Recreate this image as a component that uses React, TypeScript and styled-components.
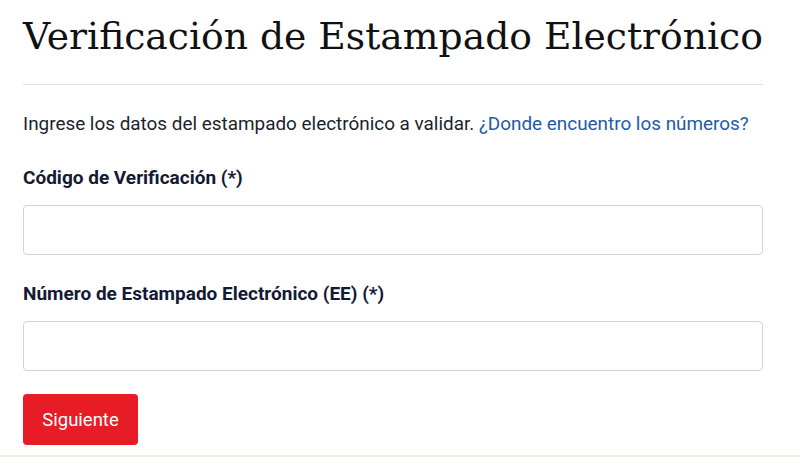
import React from 'react';
import styled, { createGlobalStyle } from 'styled-components';

const GlobalStyle = createGlobalStyle`
  html, body {
    margin: 0;
    padding: 0;
    background: #ffffff;
  }
  body {
    font-family: Roboto, "Liberation Sans", sans-serif;
    color: #1b1f2e;
  }
`;

const Page = styled.div`
  width: 800px;
  height: 457px;
  box-sizing: border-box;
  overflow: hidden;
  border-bottom: 2px solid #eef0e6;
`;

const Content = styled.main`
  width: 740px;
  margin-left: 23px;
  display: flex;
  flex-direction: column;
`;

const Title = styled.h1`
  margin: 12px 0 0;
  font-family: "DejaVu Serif", "Liberation Serif", serif;
  font-weight: 400;
  font-size: 37.7px;
  line-height: 48px;
  color: #111111;
  white-space: nowrap;
`;

const Divider = styled.hr`
  margin: 24px 0 0;
  border: 0;
  border-top: 1px solid #e3e3e3;
`;

const Intro = styled.p`
  margin: 27px 0 0;
  font-size: 18.9px;
  line-height: 24px;
  color: #1b1f2e;
`;

const HelpLink = styled.a`
  color: #1f5ba8;
  text-decoration: none;
`;

const Field = styled.div`
  display: flex;
  flex-direction: column;
  margin-top: ${(p: { $top: number }) => p.$top}px;
`;

const Label = styled.label`
  font-size: 19px;
  font-weight: 700;
  line-height: 24px;
  color: #141a33;
`;

const Input = styled.input`
  margin-top: 15px;
  height: 50px;
  box-sizing: border-box;
  border: 1px solid #cfd3da;
  border-radius: 4px;
  padding: 0 12px;
  font-size: 18px;
  font-family: inherit;
  outline: none;
`;

const SubmitButton = styled.button`
  align-self: flex-start;
  margin-top: 23px;
  width: 115px;
  height: 51px;
  border: 0;
  border-radius: 4px;
  background: #e71c24;
  color: #ffffff;
  font-family: Roboto, "Liberation Sans", sans-serif;
  font-size: 18.5px;
  cursor: pointer;
`;

export default function App() {
  return (
    <>
      <GlobalStyle />
      <Page>
        <Content>
          <Title>Verificación de Estampado Electrónico</Title>
          <Divider />
          <Intro>
            Ingrese los datos del estampado electrónico a validar.{' '}
            <HelpLink href="#">¿Donde encuentro los números?</HelpLink>
          </Intro>
          <Field $top={30}>
            <Label htmlFor="codigo">Código de Verificación (*)</Label>
            <Input id="codigo" type="text" />
          </Field>
          <Field $top={27}>
            <Label htmlFor="numero">Número de Estampado Electrónico (EE) (*)</Label>
            <Input id="numero" type="text" />
          </Field>
          <SubmitButton type="button">Siguiente</SubmitButton>
        </Content>
      </Page>
    </>
  );
}
